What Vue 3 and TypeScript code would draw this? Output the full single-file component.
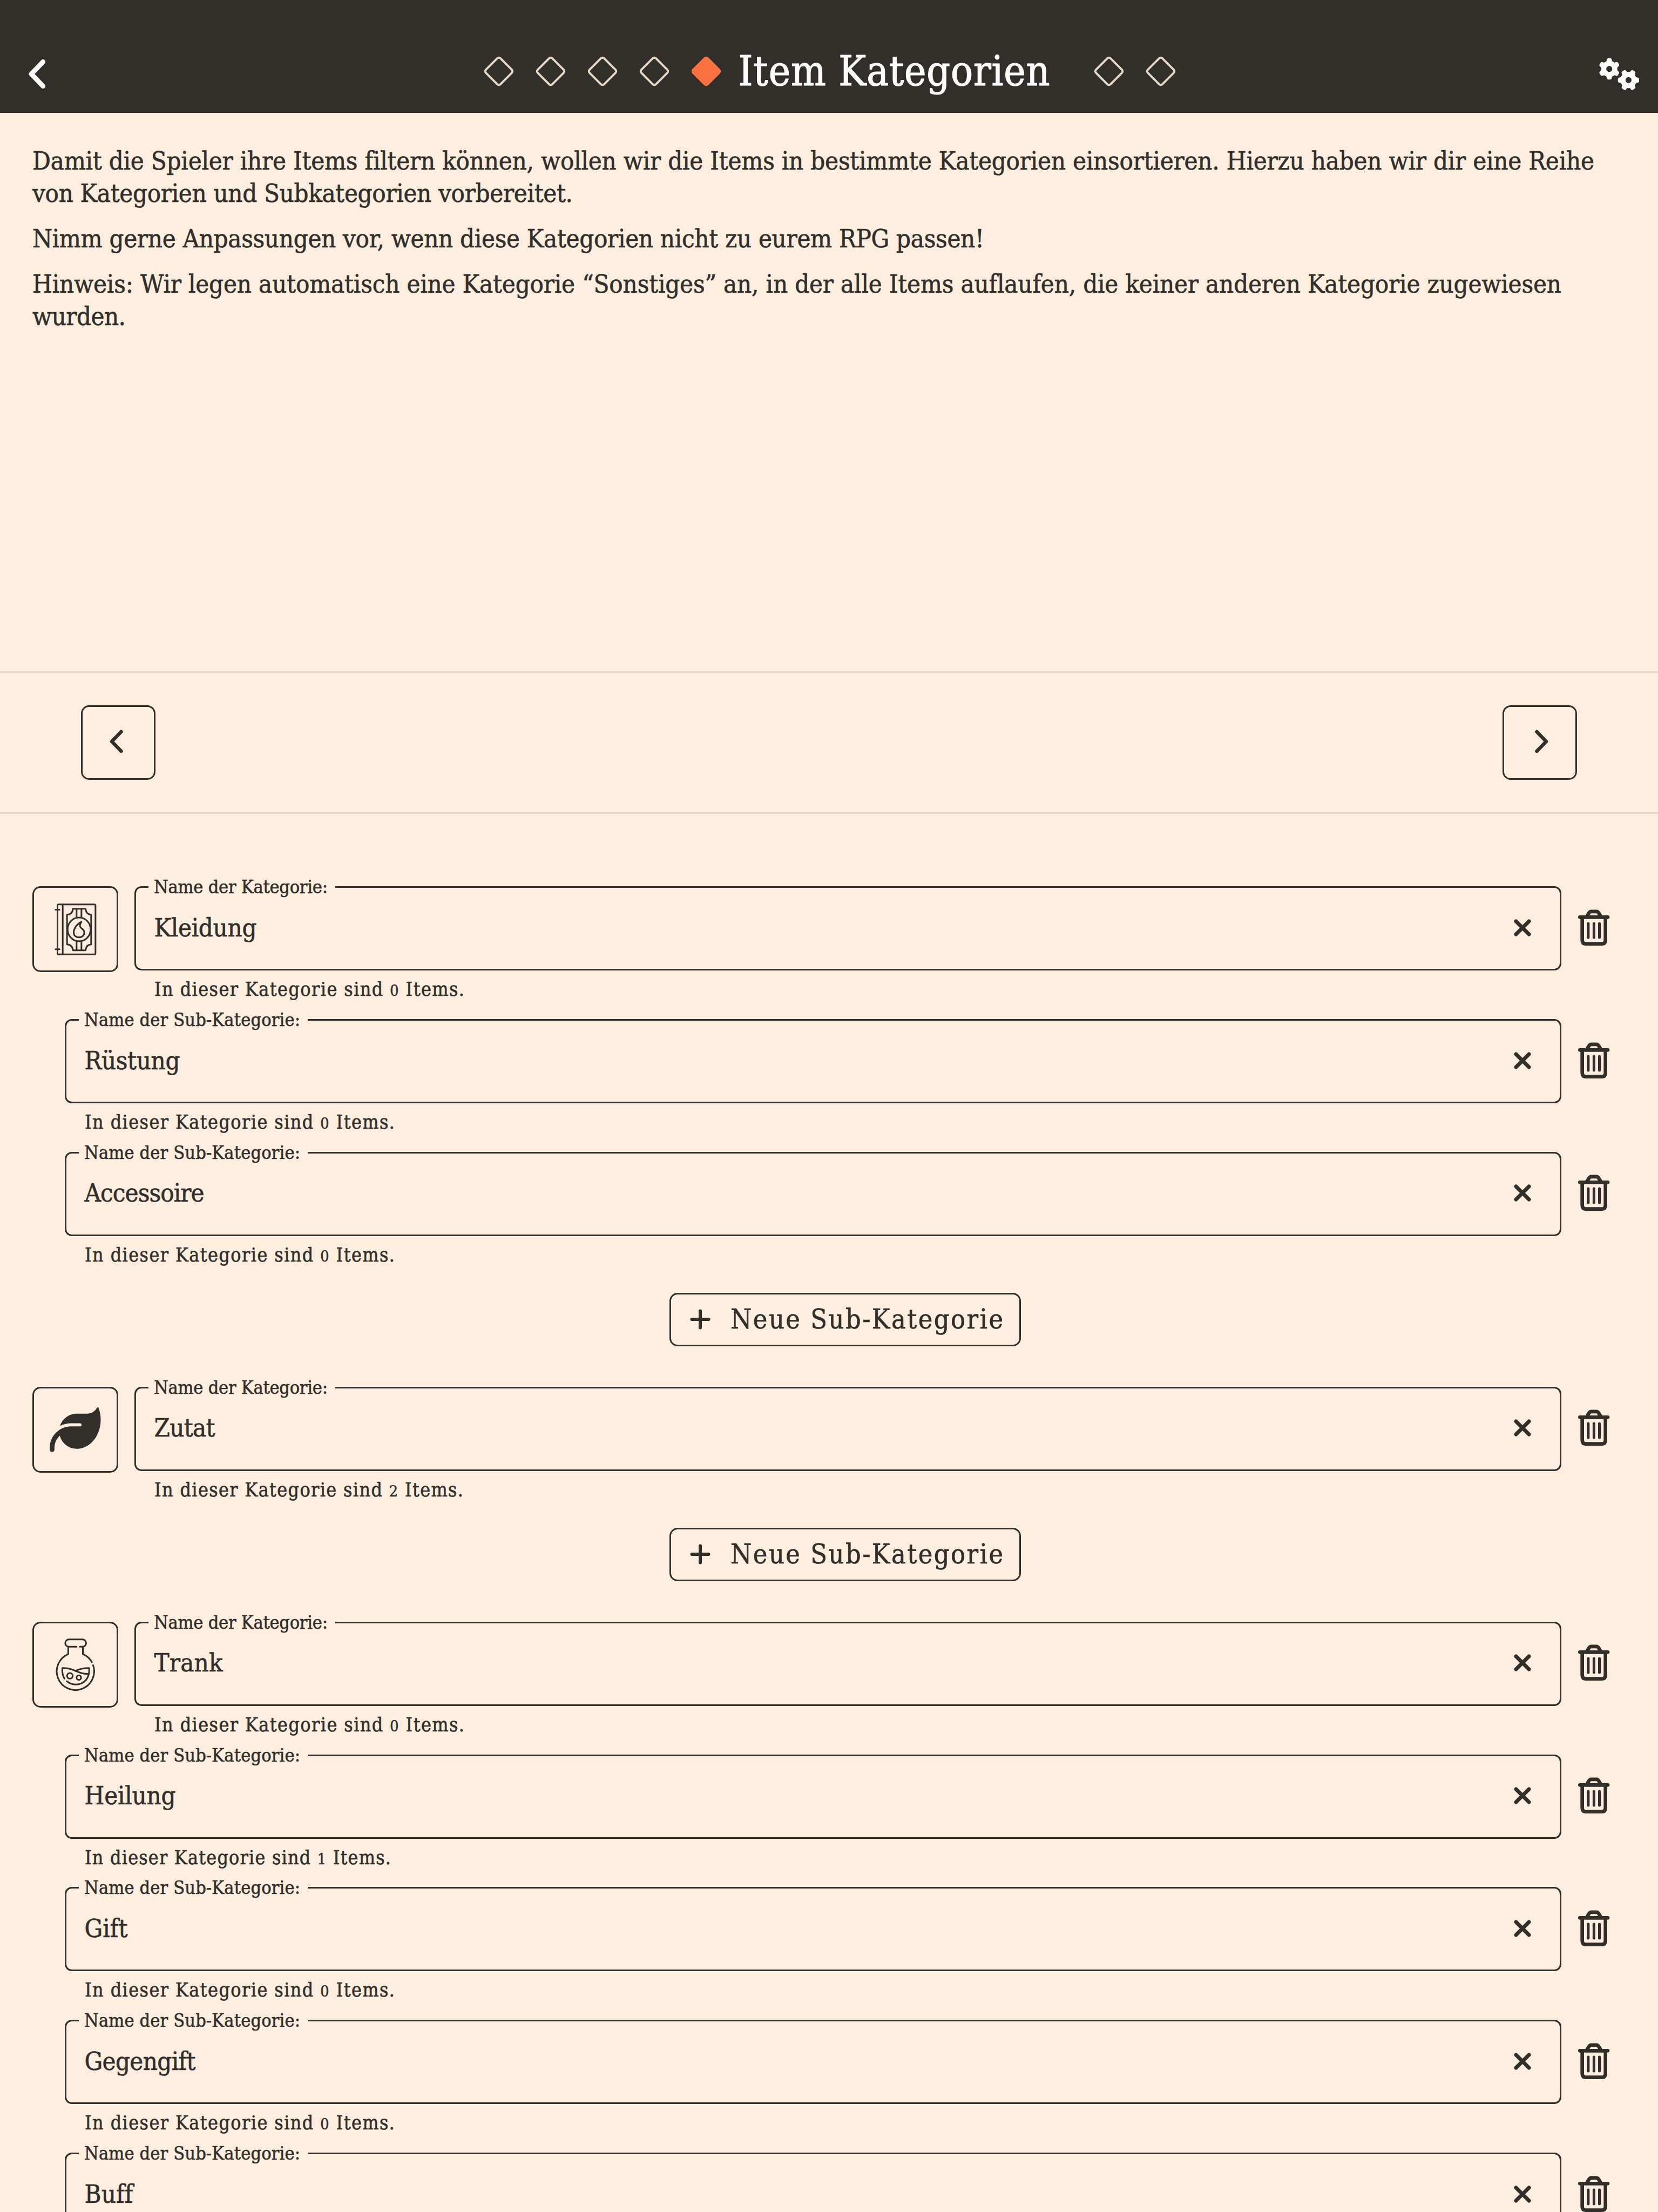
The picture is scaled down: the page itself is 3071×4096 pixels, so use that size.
<script setup lang="ts">
import type { Directive } from 'vue'

interface Entry {
  name: string
  width: number
  items?: number
}
interface Category extends Entry {
  icon: 'book' | 'leaf' | 'flask'
  subs: Entry[]
  canAdd: boolean
}

const categories: Category[] = [
  {
    name: 'Kleidung',
    width: 190,
    items: 0,
    icon: 'book',
    canAdd: true,
    subs: [
      { name: 'Rüstung', width: 177, items: 0 },
      { name: 'Accessoire', width: 222, items: 0 },
    ],
  },
  { name: 'Zutat', width: 113, items: 2, icon: 'leaf', canAdd: true, subs: [] },
  {
    name: 'Trank',
    width: 127,
    items: 0,
    icon: 'flask',
    canAdd: false,
    subs: [
      { name: 'Heilung', width: 169, items: 1 },
      { name: 'Gift', width: 80, items: 0 },
      { name: 'Gegengift', width: 206, items: 0 },
      { name: 'Buff', width: 90 },
    ],
  },
]

const helperWidths: Record<number, number> = { 0: 574, 1: 567, 2: 572 }

interface Row extends Entry {
  label: string
  labelWidth: number
  icon: Category['icon'] | null
}

const rowsOf = (c: Category): Row[] => [
  { ...c, label: 'Name der Kategorie:', labelWidth: 322 },
  ...c.subs.map((s) => ({
    ...s,
    label: 'Name der Sub-Kategorie:',
    labelWidth: 400,
    icon: null,
  })),
]

const intro = [
  [
    { text: 'Damit die Spieler ihre Items filtern können, wollen wir die Items in bestimmte Kategorien einsortieren. Hierzu haben wir dir eine Reihe', width: 2893 },
    { text: 'von Kategorien und Subkategorien vorbereitet.', width: 1001 },
  ],
  [{ text: 'Nimm gerne Anpassungen vor, wenn diese Kategorien nicht zu eurem RPG passen!', width: 1763 }],
  [
    { text: 'Hinweis: Wir legen automatisch eine Kategorie “Sonstiges” an, in der alle Items auflaufen, die keiner anderen Kategorie zugewiesen', width: 2832 },
    { text: 'wurden.', width: 173 },
  ],
]

// Tracks a line of text out (or in) to the requested width.
const vFit: Directive<HTMLElement, number> = {
  mounted(el, { value }) {
    const count = (el.textContent ?? '').length
    const natural = el.getBoundingClientRect().width
    el.style.letterSpacing = `${((value - natural) / (count - 1)).toFixed(3)}px`
  },
}

const gear =
  'M308.5 135.3c7.1-6.3 9.9-16.2 6.2-25c-2.3-5.3-4.8-10.5-7.6-15.5L304 89.4c-3-5-6.3-9.9-9.8-14.6c-5.7-7.6-15.7-10.1-24.7-7.1l-28.2 9.3c-10.7-8.8-23-16-36.2-20.9L199 27.1c-1.9-9.3-9.1-16.7-18.5-17.8C173.9 8.4 167.2 8 160.4 8h-.7c-6.8 0-13.5 .4-20.1 1.2c-9.4 1.1-16.6 8.6-18.5 17.8L115 56.1c-13.3 5-25.5 12.1-36.2 20.9L50.5 67.8c-9-3-19-.5-24.7 7.1c-3.5 4.7-6.8 9.6-9.9 14.6l-3 5.3c-2.8 5-5.3 10.2-7.6 15.6c-3.7 8.7-.9 18.6 6.2 25l22.2 19.8C32.6 161.9 32 168.9 32 176s.6 14.1 1.7 20.9L11.5 216.7c-7.1 6.3-9.9 16.2-6.2 25c2.3 5.3 4.8 10.5 7.6 15.6l3 5.2c3 5.1 6.3 9.9 9.9 14.6c5.7 7.6 15.7 10.1 24.7 7.1l28.2-9.3c10.7 8.8 23 16 36.2 20.9l6.1 29.1c1.9 9.3 9.1 16.7 18.5 17.8c6.7 .8 13.5 1.2 20.4 1.2s13.7-.4 20.4-1.2c9.4-1.1 16.6-8.6 18.5-17.8l6.1-29.1c13.3-5 25.5-12.1 36.2-20.9l28.2 9.3c9 3 19 .5 24.7-7.1c3.5-4.7 6.8-9.5 9.8-14.6l3.1-5.4c2.8-5 5.3-10.2 7.6-15.5c3.7-8.7 .9-18.6-6.2-25l-22.2-19.8c1.1-6.8 1.7-13.8 1.7-20.9s-.6-14.1-1.7-20.9l22.2-19.8zM112 176a48 48 0 1 1 96 0 48 48 0 1 1 -96 0z'
</script>

<template>
  <div class="page">
    <header class="topbar">
      <svg class="back" viewBox="0 0 40 60" fill="none">
        <path d="M29.6 7.6 8 30 29.6 52.4" stroke="currentColor" stroke-width="9" stroke-linecap="round" stroke-linejoin="round" />
      </svg>
      <div class="steps">
        <span v-for="n in 5" :key="n" class="step"><i class="diamond" :class="{ active: n === 5 }"></i></span>
        <h1 class="title"><span v-fit="577" class="line">Item Kategorien</span></h1>
        <span v-for="n in 2" :key="n" class="step"><i class="diamond"></i></span>
      </div>
      <svg class="gears" viewBox="0 0 640 512" fill="currentColor">
        <path :d="gear" />
        <path :d="gear" transform="translate(640 192) rotate(90)" />
      </svg>
    </header>

    <section class="intro">
      <p v-for="(lines, i) in intro" :key="i">
        <template v-for="l in lines" :key="l.text"><span v-fit="l.width" class="line">{{ l.text }}</span><br /></template>
      </p>
    </section>

    <nav class="pager">
      <button class="square" type="button">
        <svg class="chevron prev" viewBox="0 0 30 50" fill="none"><path d="M5.5 7 23 25 5.5 43" /></svg>
      </button>
      <button class="square" type="button">
        <svg class="chevron" viewBox="0 0 30 50" fill="none"><path d="M5.5 7 23 25 5.5 43" /></svg>
      </button>
    </nav>

    <main class="list">
      <section v-for="c in categories" :key="c.name" class="category">
        <div v-for="r in rowsOf(c)" :key="r.name" class="row" :class="{ sub: !r.icon }">
          <div v-if="r.icon" class="iconbox">
            <svg v-if="r.icon === 'book'" class="art" viewBox="-1.5 4.5 360 360">
              <rect x="78" y="46" width="211" height="277" rx="6" />
              <path d="M107 46V323M67 75H89M67 295H89" />
              <path d="M131 268V103Q161 101 164 70H234Q237 101 265 103V268Q237 270 234 301H164Q161 270 131 268Z" />
              <ellipse cx="198" cy="184.500" rx="64" ry="66" />
              <path d="M184 70V118M211 70V118M184 251V301M211 251V301" />
              <path d="M211 142C182 158 168 182 168 201C168 219 181 229 198 229C215 229 227 217 227 201C227 181 205 182 203 166C202 157 206 150 211 142Z" />
            </svg>
            <svg v-else-if="r.icon === 'leaf'" class="leaf" viewBox="0 0 512 512">
              <path d="M272 96c-78.600 0-145.100 51.500-167.700 122.500c33.600-17 71.500-26.500 111.700-26.500h88c8.800 0 16 7.200 16 16s-7.200 16-16 16H216c-16.600 0-32.700 1.900-48.300 5.400c-25.900 5.900-49.900 16.400-71.400 30.700C38.300 298.800 0 364.900 0 440v16c0 13.300 10.700 24 24 24s24-10.700 24-24V440c0-48.700 20.700-92.500 53.800-123.200C121.600 392.300 190.300 448 272 448l1 0c132.100-.7 239-130.900 239-291.400c0-42.600-7.500-83.100-21.100-119.600c-2.600-6.900-12.700-6.600-16.200-.1C455.900 72.100 418.700 96 376 96L272 96z" />
            </svg>
            <svg v-else class="art" viewBox="28.5 130.5 360 360">
              <path d="M214 212H171a20 20 0 0 1 0-40H247a20 20 0 0 1 0 40H232" />
              <path d="M168 212V253A104 104 0 1 0 306 315M249 212V253A104 104 0 0 1 299 298" />
              <path d="M147 390C136 372 133 352 135 331C165 330 185 336 209 347C240 361 262 364 279 363" />
              <path d="M209 347C230 335 255 331 284 331C288 385 258 422 209 422C190 422 172 415 160 404" />
              <circle cx="177" cy="374" r="15.500" />
              <circle cx="226.500" cy="384" r="12.500" />
            </svg>
          </div>
          <div class="control">
            <div class="field">
              <label class="label"><span v-fit="r.labelWidth" class="line">{{ r.label }}</span></label>
              <span class="value"><span v-fit="r.width" class="line">{{ r.name }}</span></span>
              <svg class="clear" viewBox="0 0 40 40"><path d="M8 8 32 32M32 8 8 32" /></svg>
            </div>
            <div v-if="r.items !== undefined" class="helper">
              <span v-fit="helperWidths[r.items]" class="line">In dieser Kategorie sind <span class="num">{{ r.items }}</span> Items.</span>
            </div>
          </div>
          <div class="remove">
            <svg class="trash" viewBox="660 186 192 216">
              <path d="M679 235H834M716 234L728 214Q734 203.500 742 203.500H771Q779 203.500 785 214L797 234" />
              <path d="M692 240V362Q692 383 713 383H800Q821 383 821 362V240" />
              <path class="bars" d="M725.500 270V348M757 270V348M787.500 270V348" />
            </svg>
          </div>
        </div>
        <button v-if="c.canAdd" class="add" type="button">
          <svg class="plus" viewBox="0 0 40 40"><path d="M20 4.500V35.500M4.500 20H35.500" /></svg>
          <span v-fit="505" class="line">Neue Sub-Kategorie</span>
        </button>
      </section>
    </main>
  </div>
</template>

<style>
html,
body {
  margin: 0;
  background: #fdeee0;
}
</style>

<style scoped>
.page {
  --ink: #322e29;
  --paper: #fdeee0;
  --sand: #e6d8c6;
  width: 3071px;
  height: 4096px;
  overflow: hidden;
  background: var(--paper);
  color: var(--ink);
  font-family: 'DejaVu Serif Condensed', 'DejaVu Serif', serif;
  font-stretch: condensed;
  font-variant-ligatures: none;
  -webkit-text-stroke: 0.600px currentColor;
}
.line {
  display: inline-block;
  white-space: nowrap;
}
svg {
  display: block;
  flex: none;
}
button {
  font: inherit;
  color: inherit;
  background: none;
  margin: 0;
  padding: 0;
  box-sizing: border-box;
}

.topbar {
  box-sizing: border-box;
  height: 209px;
  padding: 64px 34px 10px 50px;
  background: var(--ink);
  color: #fff;
  display: grid;
  grid-template-columns: 75px 1fr 75px;
  align-items: center;
}
.back {
  width: 40px;
  height: 60px;
  margin-top: 11px;
}
.gears {
  width: 75px;
  height: 60px;
  margin-top: 11px;
}
.steps {
  display: flex;
  align-items: center;
  justify-content: center;
  margin-left: -14px;
}
.step {
  width: 96px;
  display: flex;
  justify-content: center;
}
.diamond {
  box-sizing: border-box;
  width: 42px;
  height: 42px;
  border: 4px solid var(--sand);
  border-radius: 6px;
  transform: rotate(45deg);
}
.diamond.active {
  background: #fb7140;
  border-color: #fb7140;
}
.title {
  width: 638px;
  margin: 0 0 0 12px;
  font-size: 76px;
  font-weight: 400;
  line-height: 90px;
  -webkit-text-stroke-width: 1.200px;
}

.intro {
  box-sizing: border-box;
  height: 1033.500px;
  padding: 59px 60px 0;
  font-size: 47px;
  line-height: 60px;
}
.intro p {
  margin: 0 0 24px;
}
.intro .line {
  vertical-align: top;
}

.pager {
  box-sizing: border-box;
  height: 264px;
  padding: 0 150px;
  border-top: 3px solid var(--sand);
  border-bottom: 3px solid var(--sand);
  display: flex;
  align-items: center;
  justify-content: space-between;
}
.square {
  width: 138px;
  height: 138px;
  border: 3px solid var(--ink);
  border-radius: 15px;
  display: flex;
  align-items: center;
  justify-content: center;
}
.chevron {
  width: 30px;
  height: 50px;
  margin-left: 8px;
  margin-top: -3px;
}
.chevron.prev {
  transform: scaleX(-1);
  margin-left: -8px;
}
.chevron path {
  stroke: var(--ink);
  stroke-width: 6.500;
  stroke-linecap: round;
  stroke-linejoin: round;
}

.list {
  padding: 134.700px 86px 0 60px;
}
.category {
  display: flex;
  flex-direction: column;
  padding-bottom: 75px;
}
.row {
  height: 245.880px;
  display: flex;
  align-items: flex-start;
}
.row.sub {
  padding-left: 60px;
}
.iconbox {
  box-sizing: border-box;
  flex: none;
  width: 159px;
  height: 159px;
  margin-right: 30px;
  border: 3px solid var(--ink);
  border-radius: 15px;
  display: flex;
  align-items: center;
  justify-content: center;
}
.art {
  width: 120px;
  height: 120px;
  fill: none;
  stroke: var(--ink);
  stroke-width: 9;
  stroke-linecap: round;
  stroke-linejoin: round;
}
.leaf {
  width: 94.500px;
  height: 94.500px;
  fill: var(--ink);
}
.control {
  flex: 1;
}
.field {
  position: relative;
  box-sizing: border-box;
  height: 156px;
  padding: 0 49px 3px 33.500px;
  border: 3px solid var(--ink);
  border-radius: 13px;
  display: flex;
  align-items: center;
  justify-content: space-between;
}
.label {
  position: absolute;
  top: -24px;
  left: 22.500px;
  padding: 0 14px 0 10.500px;
  background: var(--paper);
  font-size: 34px;
  line-height: 44px;
}
.value {
  font-size: 47px;
  line-height: 60px;
}
.clear {
  width: 40px;
  height: 40px;
}
.clear path,
.plus path {
  stroke: var(--ink);
  stroke-width: 7;
  stroke-linecap: round;
}
.plus path {
  stroke-width: 6;
}
.helper {
  padding: 13px 0 0 37px;
  font-size: 35.500px;
  line-height: 44px;
}
.num {
  font-size: 0.8em;
}
.remove {
  width: 93px;
  height: 153px;
  display: flex;
  align-items: center;
  justify-content: center;
}
.trash {
  width: 64px;
  height: 72px;
  margin-left: 26px;
  fill: none;
  stroke: var(--ink);
  stroke-width: 20;
  stroke-linecap: round;
  stroke-linejoin: round;
}
.trash .bars {
  stroke-width: 15;
}
.add {
  align-self: center;
  width: 651px;
  height: 99px;
  margin: 15px 0 0 86px;
  padding-left: 34px;
  border: 3px solid var(--ink);
  border-radius: 15px;
  display: flex;
  align-items: center;
  gap: 36px;
  font-size: 50px;
  line-height: 60px;
}
.plus {
  width: 40px;
  height: 40px;
}
</style>
